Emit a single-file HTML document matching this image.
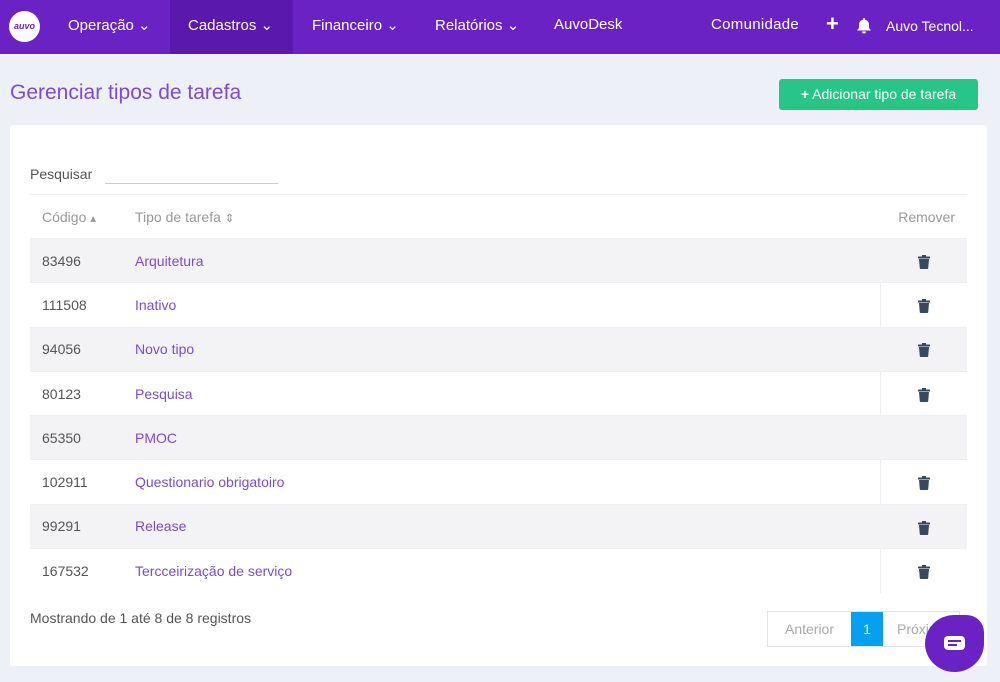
<!DOCTYPE html><html><head><style>
*{margin:0;padding:0;box-sizing:border-box}
body{width:1000px;height:682px;overflow:hidden;background:#edf1f7;font-family:"Liberation Sans",sans-serif;position:relative}
.nav{position:absolute;left:0;top:0;width:1000px;height:54px;background:#6a22c4;color:#fff;font-size:15px}
.nav span{position:absolute;top:16px}
.logo{position:absolute;left:9px;top:11px;width:31px;height:31px;border-radius:50%;background:#fff;color:#6a22c4;font-size:9px;font-weight:bold;text-align:center;line-height:31px;font-style:italic}
.act{position:absolute;left:170px;top:0;width:123px;height:54px;background:#5a18ad}
h1{position:absolute;left:10px;top:81px;font-size:21px;font-weight:normal;color:#7a4bd6}
.btn{position:absolute;left:779px;top:79px;width:199px;height:31px;background:#27c686;border-radius:3px;color:#fff;font-size:14px;line-height:31px;text-align:center}
.card{position:absolute;left:10px;top:125px;width:977px;height:541px;background:#fff;border-radius:3px}
.lbl{position:absolute;left:30px;top:166px;font-size:14px;color:#555}
.inp{position:absolute;left:105px;top:183px;width:173px;border-bottom:1px solid #ccc}
table{position:absolute;left:30px;top:194px;width:937px;border-collapse:collapse;font-size:14px;table-layout:fixed}
th{height:44px;font-weight:normal;color:#999;text-align:left;border-top:1px solid #f0f0f3}
td{height:44.3px;border-top:1px solid #eee}
tr:nth-child(even) td{background:#f3f3f6}
.c{padding-left:12px}
td.c{color:#555}
td.t{color:#7a4bd6}
td.r{text-align:center;border-left:1px solid #eee}
tr:nth-child(even) td.r{border-left-color:#f3f3f6}
.foot{position:absolute;left:30px;top:610px;font-size:14px;color:#555}
.pg{position:absolute;left:767px;top:611px;height:36px;border:1px solid #e3e3e3;display:flex;font-size:14px;color:#aaa}
.pg div{line-height:34px}
.chat{position:absolute;left:925px;top:615px;width:59px;height:57px;background:#6a22c4;border-radius:50% 30% 50% 50%}
</style></head><body>
<div class="nav"><div class="act"></div><div class="logo">auvo</div>
<span style="left:68px">Operação ⌄</span><span style="left:188px">Cadastros ⌄</span><span style="left:312px">Financeiro ⌄</span><span style="left:435px">Relatórios ⌄</span><span style="left:554px">AuvoDesk</span><span style="left:711px;letter-spacing:0.3px">Comunidade</span><span style="left:826px;top:11px;font-size:22px;font-weight:bold">+</span>
<svg style="position:absolute;left:856px;top:17px" width="16" height="17" viewBox="0 0 16 17"><path d="M8 1a1 1 0 0 1 1 1v.6A5 5 0 0 1 13 7.5v3.5l2 2.5H1l2-2.5V7.5A5 5 0 0 1 7 2.6V2a1 1 0 0 1 1-1z" fill="#fff"/><path d="M6 14.5h4a2 2 0 0 1-4 0z" fill="#fff"/></svg>
<span style="left:886px;font-size:14px;top:18px">Auvo Tecnol...</span></div>
<h1>Gerenciar tipos de tarefa</h1>
<div class="btn"><b>+</b> Adicionar tipo de tarefa</div>
<div class="card"></div>
<div class="lbl">Pesquisar</div><div class="inp"></div>
<table><colgroup><col style="width:105px"><col style="width:745px"><col></colgroup>
<tr><th class="c">Código <small>▴</small></th><th>Tipo de tarefa <small>⇕</small></th><th style="text-align:right;padding-right:12px">Remover</th></tr>
<tr><td class="c">83496</td><td class="t">Arquitetura</td><td class="r">T</td></tr>
<tr><td class="c">111508</td><td class="t">Inativo</td><td class="r">T</td></tr>
<tr><td class="c">94056</td><td class="t">Novo tipo</td><td class="r">T</td></tr>
<tr><td class="c">80123</td><td class="t">Pesquisa</td><td class="r">T</td></tr>
<tr><td class="c">65350</td><td class="t">PMOC</td><td class="r"></td></tr>
<tr><td class="c">102911</td><td class="t">Questionario obrigatoiro</td><td class="r">T</td></tr>
<tr><td class="c">99291</td><td class="t">Release</td><td class="r">T</td></tr>
<tr><td class="c">167532</td><td class="t">Tercceirização de serviço</td><td class="r">T</td></tr>
</table>
<div class="foot">Mostrando de 1 até 8 de 8 registros</div>
<div class="pg"><div style="width:83px;text-align:center">Anterior</div><div style="background:#06a0f0;color:#fff;width:32px;text-align:center">1</div><div style="padding-left:14px;width:76px">Próximo</div></div>
<div class="chat"><div style="position:absolute;left:19px;top:21px;width:21px;height:14px;background:#fff;border-radius:4px"></div><div style="position:absolute;left:23px;top:25px;width:13px;height:2px;background:#6a22c4"></div><div style="position:absolute;left:23px;top:29px;width:9px;height:2px;background:#6a22c4"></div></div>
<script>
document.querySelectorAll('td.r').forEach(function(t){if(t.textContent=='T')t.innerHTML='<svg width="12" height="14" viewBox="0 0 12 14" style="vertical-align:middle"><rect x="0" y="1.5" width="12" height="2" rx=".5" fill="#37495a"/><rect x="4" y="0" width="4" height="2" fill="#37495a"/><path d="M1 4h10l-.8 9.2a1 1 0 0 1-1 .8H2.8a1 1 0 0 1-1-.8z" fill="#37495a"/></svg>';});
</script>
</body></html>
